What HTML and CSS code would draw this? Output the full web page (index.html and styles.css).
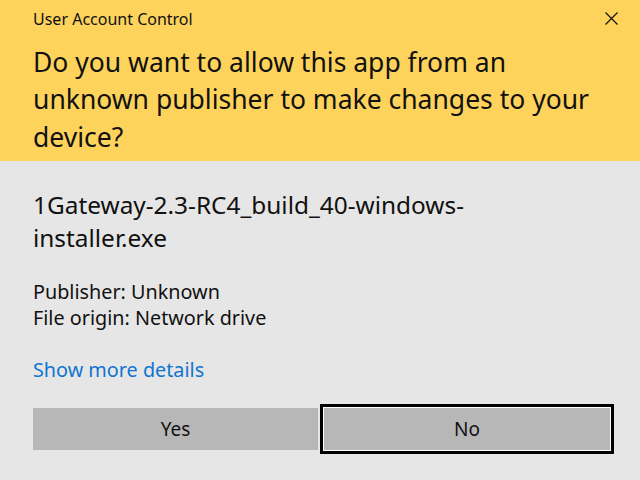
FILE: index.html
```html
<!DOCTYPE html>
<html>
<head>
<meta charset="utf-8">
<link rel="stylesheet" href="styles.css">
</head>
<body>
<div class="dialog">
  <header class="header">
    <div class="title-bar">
      <span class="title">User Account Control</span>
      <svg class="close" width="13" height="13" viewBox="0 0 13 13"><path d="M0.5 0.5 L12.5 12.5 M12.5 0.5 L0.5 12.5" stroke="#111" stroke-width="1.2" fill="none"/></svg>
    </div>
    <div class="question">Do you want to allow this app from an<br>unknown publisher to make changes to your<br>device?</div>
  </header>
  <main class="body">
    <div class="filename">1Gateway-2.3-RC4_build_40-windows-<br>installer.exe</div>
    <div class="meta">
      <div>Publisher: Unknown</div>
      <div>File origin: Network drive</div>
    </div>
    <a class="more">Show more details</a>
    <div class="buttons">
      <button class="btn yes">Yes</button>
      <button class="btn no">No</button>
    </div>
  </main>
</div>
</body>
</html>
```
FILE: styles.css
```css
html, body {
  margin: 0;
  padding: 0;
}
body {
  width: 640px;
  height: 480px;
  background: #e6e6e6;
  font-family: "Noto Sans", "Open Sans", sans-serif;
  color: #111;
  overflow: hidden;
}
.header {
  background: #fed35c;
  height: 161px;
  box-sizing: border-box;
}
.title-bar {
  height: 36px;
  display: flex;
  align-items: center;
  justify-content: space-between;
  padding: 1px 22px 0 33px;
  box-sizing: border-box;
}
.title {
  font-size: 16px;
}
.close {
  display: block;
}
.question {
  margin-top: 7.5px;
  padding: 0 33px;
  font-size: 26.5px;
  line-height: 37.5px;
}
.body {
  padding: 27px 20px 0 33px;
}
.filename {
  font-size: 24.4px;
  line-height: 33px;
}
.meta {
  margin-top: 25px;
  font-size: 19.8px;
  line-height: 26px;
}
.more {
  display: block;
  margin-top: 26px;
  font-size: 19.8px;
  line-height: 26px;
  color: #0f75d0;
}
.buttons {
  margin-top: 21px;
  display: flex;
  align-items: center;
  gap: 2px;
}
.btn {
  flex-shrink: 0;
  background: #b7b7b7;
  border: none;
  font-family: inherit;
  font-size: 19px;
  color: #111;
  padding: 0 0 1px;
  box-sizing: border-box;
}
.yes {
  width: 285px;
  height: 42px;
}
.no {
  width: 294px;
  height: 50px;
  border: 3px solid #000;
  box-shadow: inset 0 0 0 1px #fff;
}
```
